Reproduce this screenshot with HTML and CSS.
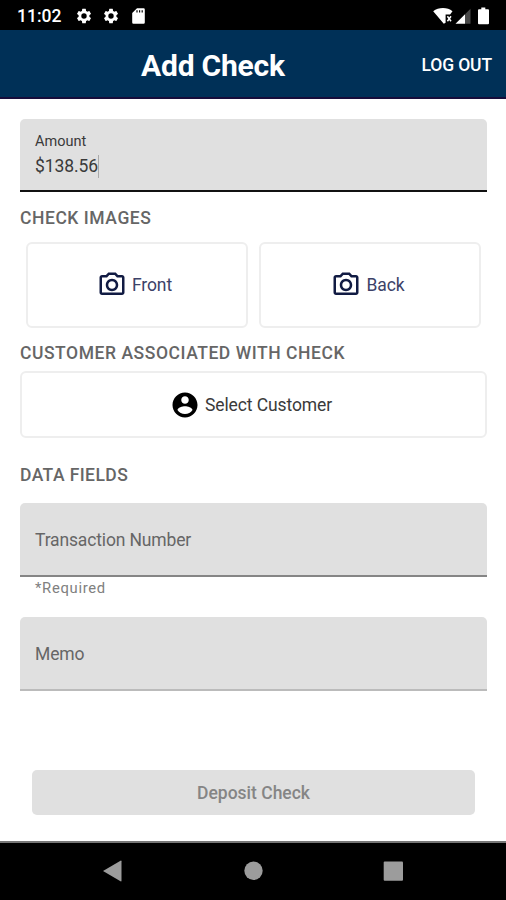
FILE: index.html
```html
<!DOCTYPE html>
<html lang="en">
<head>
<meta charset="utf-8">
<title>Add Check</title>
<link rel="stylesheet" href="styles.css">
</head>
<body>
<svg class="defs" width="0" height="0">
  <symbol id="gear" viewBox="0 0 24 24"><path d="M19.14 12.94c.04-.3.06-.61.06-.94 0-.32-.02-.64-.07-.94l2.03-1.58a.49.49 0 0 0 .12-.61l-1.92-3.32a.49.49 0 0 0-.59-.22l-2.39.96c-.5-.38-1.03-.7-1.62-.94l-.36-2.54a.48.48 0 0 0-.48-.41h-3.84a.47.47 0 0 0-.47.41l-.36 2.54c-.59.24-1.13.57-1.62.94l-2.39-.96a.48.48 0 0 0-.59.22L2.74 8.87a.47.47 0 0 0 .12.61l2.03 1.58c-.05.3-.09.63-.09.94s.02.64.07.94l-2.03 1.58a.49.49 0 0 0-.12.61l1.92 3.32c.12.22.37.29.59.22l2.39-.96c.5.38 1.03.7 1.62.94l.36 2.54c.05.24.24.41.48.41h3.84c.24 0 .44-.17.47-.41l.36-2.54c.59-.24 1.13-.56 1.62-.94l2.39.96c.22.08.47 0 .59-.22l1.92-3.32a.47.47 0 0 0-.12-.61zM12 15.6a3.6 3.6 0 1 1 0-7.2 3.6 3.6 0 0 1 0 7.2z"/></symbol>
  <symbol id="camera" viewBox="0 0 24 24"><path d="M14.12 4l1.83 2H20v12H4V6h4.05l1.83-2h4.24M15 2H9L7.17 4H4c-1.1 0-2 .9-2 2v12c0 1.1.9 2 2 2h16c1.1 0 2-.9 2-2V6c0-1.1-.9-2-2-2h-3.17L15 2zm-3 7c1.65 0 3 1.35 3 3s-1.35 3-3 3-3-1.35-3-3 1.35-3 3-3m0-2c-2.76 0-5 2.24-5 5s2.24 5 5 5 5-2.24 5-5-2.24-5-5-5z"/></symbol>
</svg>

<div class="status">
  <span class="time">11:02</span>
  <svg class="gear"><use href="#gear"/></svg>
  <svg class="gear"><use href="#gear"/></svg>
  <svg class="sd" viewBox="0 0 13 16"><path fill-rule="evenodd" d="M5 .3h6.6a1.2 1.2 0 0 1 1.2 1.2v13a1.2 1.2 0 0 1-1.2 1.2H1.400a1.2 1.2 0 0 1-1.2-1.2V5zM4.400 2.200v2.200h1.200V2.200zm2.600 0v2.200h1.200V2.200zm2.600 0v2.200h1.200V2.200z"/></svg>
  <svg class="signals" viewBox="0 0 58 18">
    <path d="M.2 4.200C5.500-.2 14.500-.2 19.500 4.200L17.100 7.500h-4.500v8.200l-1.800 1.100z"/>
    <path d="M14.400 9.300l3.600 5m0-5l-3.600 5" stroke="#fff" stroke-width="1.500"/>
    <path d="M22.500 16.800L32 7.300v9.500z"/>
    <path class="dim" d="M32 7.300l5.500-5.500v15H32z"/>
    <path d="M48.300 .5h4v1.800H55a1 1 0 0 1 1 1v13a1 1 0 0 1-1 1h-9a1 1 0 0 1-1-1v-13a1 1 0 0 1 1-1h2.300z"/>
  </svg>
</div>

<header class="bar">
  <h1 class="title">Add Check</h1>
  <span class="logout">LOG OUT</span>
</header>

<main class="content">
  <div class="field focused">
    <span class="label">Amount</span>
    <span class="value">$138.56</span>
  </div>

  <h2 class="heading images-heading">CHECK IMAGES</h2>
  <div class="images">
    <div class="card front"><svg class="icon"><use href="#camera"/></svg><span>Front</span></div>
    <div class="card back"><svg class="icon"><use href="#camera"/></svg><span>Back</span></div>
  </div>

  <h2 class="heading customer-heading">CUSTOMER ASSOCIATED WITH CHECK</h2>
  <div class="card customer">
    <svg class="icon" viewBox="0 0 24 24"><path d="M12 2C6.480 2 2 6.480 2 12s4.480 10 10 10 10-4.480 10-10S17.520 2 12 2zm0 3c1.660 0 3 1.340 3 3s-1.340 3-3 3-3-1.340-3-3 1.340-3 3-3zm0 14.200c-2.500 0-4.710-1.280-6-3.220.030-1.990 4-3.080 6-3.080 1.990 0 5.970 1.090 6 3.080-1.290 1.940-3.500 3.220-6 3.220z"/></svg>
    <span>Select Customer</span>
  </div>

  <h2 class="heading data-heading">DATA FIELDS</h2>
  <div class="field transaction"><span class="placeholder">Transaction Number</span></div>
  <p class="helper">*Required</p>
  <div class="field memo"><span class="placeholder">Memo</span></div>

  <div class="deposit">Deposit Check</div>
</main>

<nav class="nav">
  <svg viewBox="0 0 506 57"><path d="M103 28l17.500-10.300a.7.700 0 0 1 1 .6v19.400a.7.700 0 0 1-1 .6z"/><circle cx="253.500" cy="27.800" r="9.200"/><rect x="383.700" y="18.600" width="19.300" height="19.200" rx="1"/></svg>
</nav>
</body>
</html>
```
FILE: styles.css
```css
* { box-sizing: border-box; }

body {
  margin: 0;
  width: 506px;
  height: 900px;
  overflow: hidden;
  display: flex;
  flex-direction: column;
  background: #fff;
  font-family: Roboto, "Liberation Sans", sans-serif;
  white-space: nowrap;
}

.defs { position: absolute; }

.status {
  height: 30px;
  flex: none;
  display: flex;
  align-items: center;
  padding: 2px 15px 0 17px;
  background: #000;
  fill: #fff;
  color: #fff;
}

.time { width: 58px; font-size: 17.500px; font-weight: 500; line-height: 28px; }
.gear { width: 18px; height: 18px; margin-right: 9px; }
.sd { width: 13px; height: 16px; margin-left: 3px; }
.signals { width: 58px; height: 18px; margin-left: auto; }
.dim { fill: #484848; }

.bar {
  height: 69px;
  flex: none;
  display: grid;
  grid-template-columns: 1fr auto;
  align-items: center;
  padding: 0 14px 0 141px;
  background: #003057;
  border-bottom: 2px solid #170d3b;
  color: #fff;
}

.title { margin: 4px 0 0; font-size: 30px; line-height: 36px; font-weight: 700; letter-spacing: -.2px; }
.logout { margin-top: 2px; font-size: 17.500px; line-height: 24px; font-weight: 500; letter-spacing: -.12px; }

.content {
  flex: 1;
  padding: 20px 19px 0 20px;
  display: flex;
  flex-direction: column;
}

.field {
  flex: none;
  height: 73px;
  padding: 0 15px;
  display: flex;
  flex-direction: column;
  justify-content: center;
  background: #e0e0e0;
  border-radius: 5px 5px 0 0;
  border-bottom: 2px solid #858585;
}

.focused { border-bottom-color: #111; justify-content: flex-start; padding-top: 13px; }
.label { font-size: 14.500px; line-height: 20px; color: #3a3a3a; }
.value {
  align-self: flex-start;
  margin-top: 3px;
  font-size: 17.500px;
  line-height: 23px;
  color: #3a3a3a;
  border-right: 1px solid #aaa;
  letter-spacing: -.08px;
}

.heading {
  margin: 0;
  font-size: 17.500px;
  line-height: 22px;
  font-weight: 500;
  color: #666;
  letter-spacing: .55px;
}

.images-heading { margin-top: 15px; }

.images {
  display: grid;
  grid-template-columns: 1fr 1fr;
  gap: 11px;
  margin: 13px 6px 0;
}

.card {
  height: 86px;
  display: flex;
  align-items: center;
  justify-content: center;
  gap: 5px;
  border: 2px solid #eee;
  border-radius: 6px;
  color: #3c4268;
  font-size: 17.500px;
  line-height: 24px;
  letter-spacing: -.1px;
}

.front { padding-right: 5px; }
.back { padding-right: 4px; }
.icon { width: 30px; height: 30px; fill: #111b43; }
.customer-heading { margin-top: 14px; }
.customer { height: 67px; margin-top: 7px; padding-right: 5px; color: #3a3a3a; }
.customer .icon { fill: #000; }
.data-heading { margin-top: 26px; letter-spacing: .42px; }
.transaction { margin-top: 17px; height: 74px; }
.placeholder { padding-top: 2px; font-size: 17.500px; line-height: 24px; color: #666; letter-spacing: -.15px; }
.helper { margin: 0; padding-left: 15px; font-size: 14.800px; line-height: 22px; letter-spacing: .7px; color: #808080; }
.memo { margin-top: 18px; height: 74px; border-bottom-color: #bbb; }

.deposit {
  margin: 79px 12px 0;
  height: 45px;
  border-radius: 5px;
  background: #e0e0e0;
  color: #858585;
  font-size: 17.500px;
  line-height: 46px;
  font-weight: 500;
  text-align: center;
}

.nav { flex: none; height: 59px; background: #000; border-top: 2px solid #777; }
.nav svg { display: block; width: 506px; height: 57px; fill: #9c9c9c; }
```
